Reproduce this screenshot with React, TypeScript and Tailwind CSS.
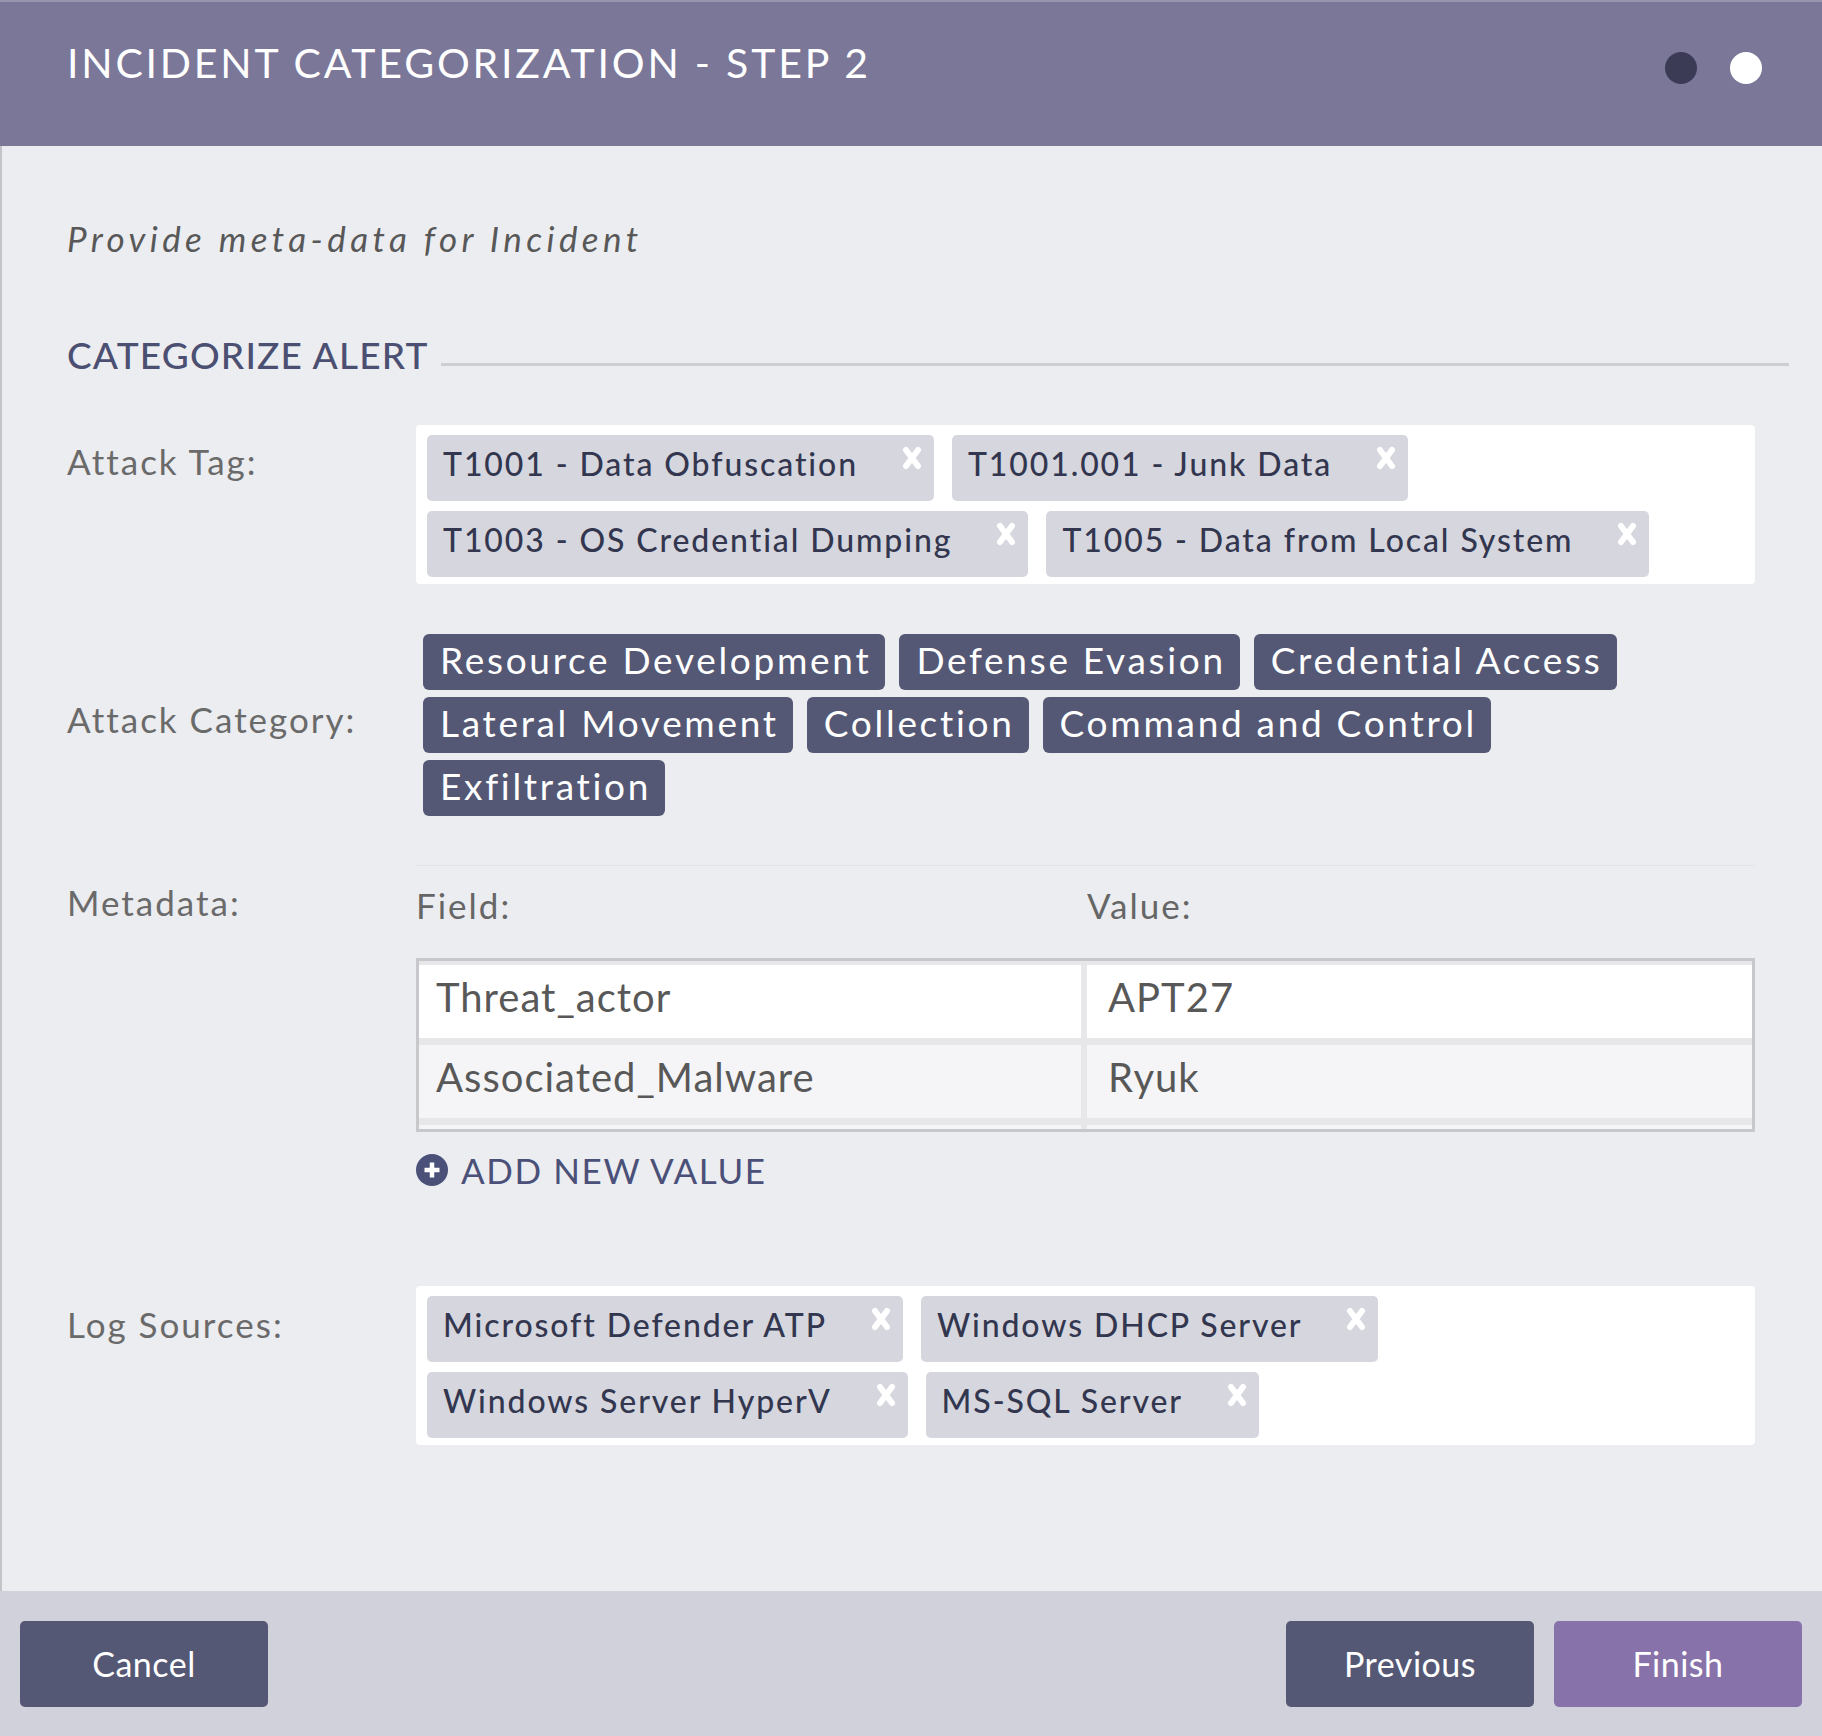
import React from 'react';

const attackTags = [
  'T1001 - Data Obfuscation',
  'T1001.001 - Junk Data',
  'T1003 - OS Credential Dumping',
  'T1005 - Data from Local System',
];

const categories = [
  'Resource Development',
  'Defense Evasion',
  'Credential Access',
  'Lateral Movement',
  'Collection',
  'Command and Control',
  'Exfiltration',
];

const logSources = [
  'Microsoft Defender ATP',
  'Windows DHCP Server',
  'Windows Server HyperV',
  'MS-SQL Server',
];

const metadata = [
  { field: 'Threat_actor', value: 'APT27', bg: 'bg-white' },
  { field: 'Associated_Malware', value: 'Ryuk', bg: 'bg-[#f5f5f7]' },
];

const CloseIcon = () => (
  <svg width="24" height="26" viewBox="0 0 24 26" className="shrink-0">
    <path d="M6 5 L18 21 M18 5 L6 21" stroke="white" strokeWidth="6" strokeLinecap="round" />
  </svg>
);

const Tag = ({ label }: { label: string }) => (
  <div className="flex items-start h-[66px] rounded-[5px] bg-[#d6d6de] pl-[16px] pr-[10px]">
    <span className="pt-[10px] text-[32px] leading-[38px] font-medium tracking-[1.9px] text-[#33364f]">{label}</span>
    <span className="ml-[42px] mt-[10px]">
      <CloseIcon />
    </span>
  </div>
);

const TagBox = ({ items }: { items: string[] }) => (
  <div className="flex flex-wrap gap-x-[18px] gap-y-[10px] rounded-[4px] bg-white pt-[10px] pb-[7px] pl-[11px] pr-[11px]">
    {items.map((t) => (
      <Tag key={t} label={t} />
    ))}
  </div>
);

const Label = ({ children, className = '' }: { children: React.ReactNode; className?: string }) => (
  <div className={`text-[35px] leading-[42px] tracking-[2px] text-[#6a6a6a] ${className}`}>{children}</div>
);

export default function App() {
  return (
    <div className="flex h-[1736px] w-full flex-col font-['Lato',sans-serif]">
      {/* Header */}
      <header className="flex h-[146px] shrink-0 items-start justify-between border-t-[2px] border-[#9893ae] bg-[#7b7799] pl-[67px] pr-[60px] pt-[36px]">
        <h1 className="text-[41px] leading-[49px] tracking-[2.8px] text-white">INCIDENT CATEGORIZATION - STEP 2</h1>
        <div className="mt-[14px] flex gap-[33px]">
          <span className="h-[32px] w-[32px] rounded-full bg-[#3c3b55]" />
          <span className="h-[32px] w-[32px] rounded-full bg-white" />
        </div>
      </header>

      {/* Body */}
      <main className="flex-1 border-l-[2px] border-[#c4c4c8] bg-[#ecedf1] pl-[65px] pr-[33px] pt-[71px]">
        <p className="text-[35px] italic leading-[42px] tracking-[4.4px] text-[#585858]">Provide meta-data for Incident</p>

        <div className="mt-[74px] flex items-end">
          <h2 className="text-[37px] font-medium leading-[44px] tracking-[1.2px] text-[#4b5072]">CATEGORIZE ALERT</h2>
          <div className="mb-[11px] ml-[12px] h-[3px] flex-1 bg-[#cdcdd2]" />
        </div>

        <div className="pr-[34px]">
          {/* Attack Tag */}
          <div className="mt-[48px] grid grid-cols-[349px_1fr]">
            <Label className="mt-[15px]">Attack Tag:</Label>
            <TagBox items={attackTags} />
          </div>

          {/* Attack Category */}
          <div className="mt-[50px] grid grid-cols-[349px_1fr]">
            <Label className="mb-[12px] self-center">Attack Category:</Label>
            <div className="flex flex-wrap gap-x-[14px] gap-y-[7px] pl-[7px] pr-[70px]">
              {categories.map((c) => (
                <span
                  key={c}
                  className="h-[56px] rounded-[6px] bg-[#545875] pl-[17px] pr-[14px] pt-[4px] text-[37px] leading-[44px] tracking-[2.7px] text-white"
                >
                  {c}
                </span>
              ))}
            </div>
          </div>

          {/* Metadata */}
          <div className="mt-[49px] grid grid-cols-[349px_1fr]">
            <Label className="mt-[16px]">Metadata:</Label>
            <div>
              <div className="grid h-[93px] grid-cols-[671px_1fr] border-t border-[#e3e4e9] pt-[18px]">
                <span className="text-[35px] leading-[42px] tracking-[2px] text-[#666]">Field:</span>
                <span className="text-[35px] leading-[42px] tracking-[2px] text-[#666]">Value:</span>
              </div>
              <div className="border-[3px] border-[#c8c8cc] bg-[#e7e7e9] pt-[4px]">
                <div className="grid grid-cols-[662px_1fr] gap-x-[6px] gap-y-[7px]">
                  {metadata.map((m) => (
                    <React.Fragment key={m.field}>
                      <div className={`h-[73px] ${m.bg} pl-[17px] pt-[8px] text-[40px] leading-[48px] tracking-[1px] text-[#585858]`}>
                        {m.field}
                      </div>
                      <div className={`h-[73px] ${m.bg} pl-[21px] pt-[8px] text-[40px] leading-[48px] tracking-[1px] text-[#585858]`}>
                        {m.value}
                      </div>
                    </React.Fragment>
                  ))}
                  <div className="h-[4px] bg-[#f5f5f7]" />
                  <div className="h-[4px] bg-[#f5f5f7]" />
                </div>
              </div>
              <button className="mt-[17px] flex items-center gap-[13px] text-[35px] leading-[42px] tracking-[1.6px] text-[#4b5078]">
                <svg width="32" height="32" viewBox="0 0 32 32">
                  <circle cx="16" cy="16" r="16" fill="#4b5078" />
                  <path d="M16 8.5 V23.5 M8.5 16 H23.5" stroke="white" strokeWidth="4.5" />
                </svg>
                ADD NEW VALUE
              </button>
            </div>
          </div>

          {/* Log Sources */}
          <div className="mt-[95px] grid grid-cols-[349px_1fr]">
            <Label className="mt-[17px]">Log Sources:</Label>
            <TagBox items={logSources} />
          </div>
        </div>
      </main>

      {/* Footer */}
      <footer className="flex h-[145px] shrink-0 items-center justify-between bg-[#d1d1db] px-[20px]">
        <button className="h-[86px] w-[248px] rounded-[5px] bg-[#545875] text-[34px] tracking-[0.5px] text-white">Cancel</button>
        <div className="flex gap-[20px]">
          <button className="h-[86px] w-[248px] rounded-[5px] bg-[#545875] text-[34px] tracking-[0.5px] text-white">Previous</button>
          <button className="h-[86px] w-[248px] rounded-[5px] bg-[#8872aa] text-[34px] tracking-[0.5px] text-white">Finish</button>
        </div>
      </footer>
    </div>
  );
}
